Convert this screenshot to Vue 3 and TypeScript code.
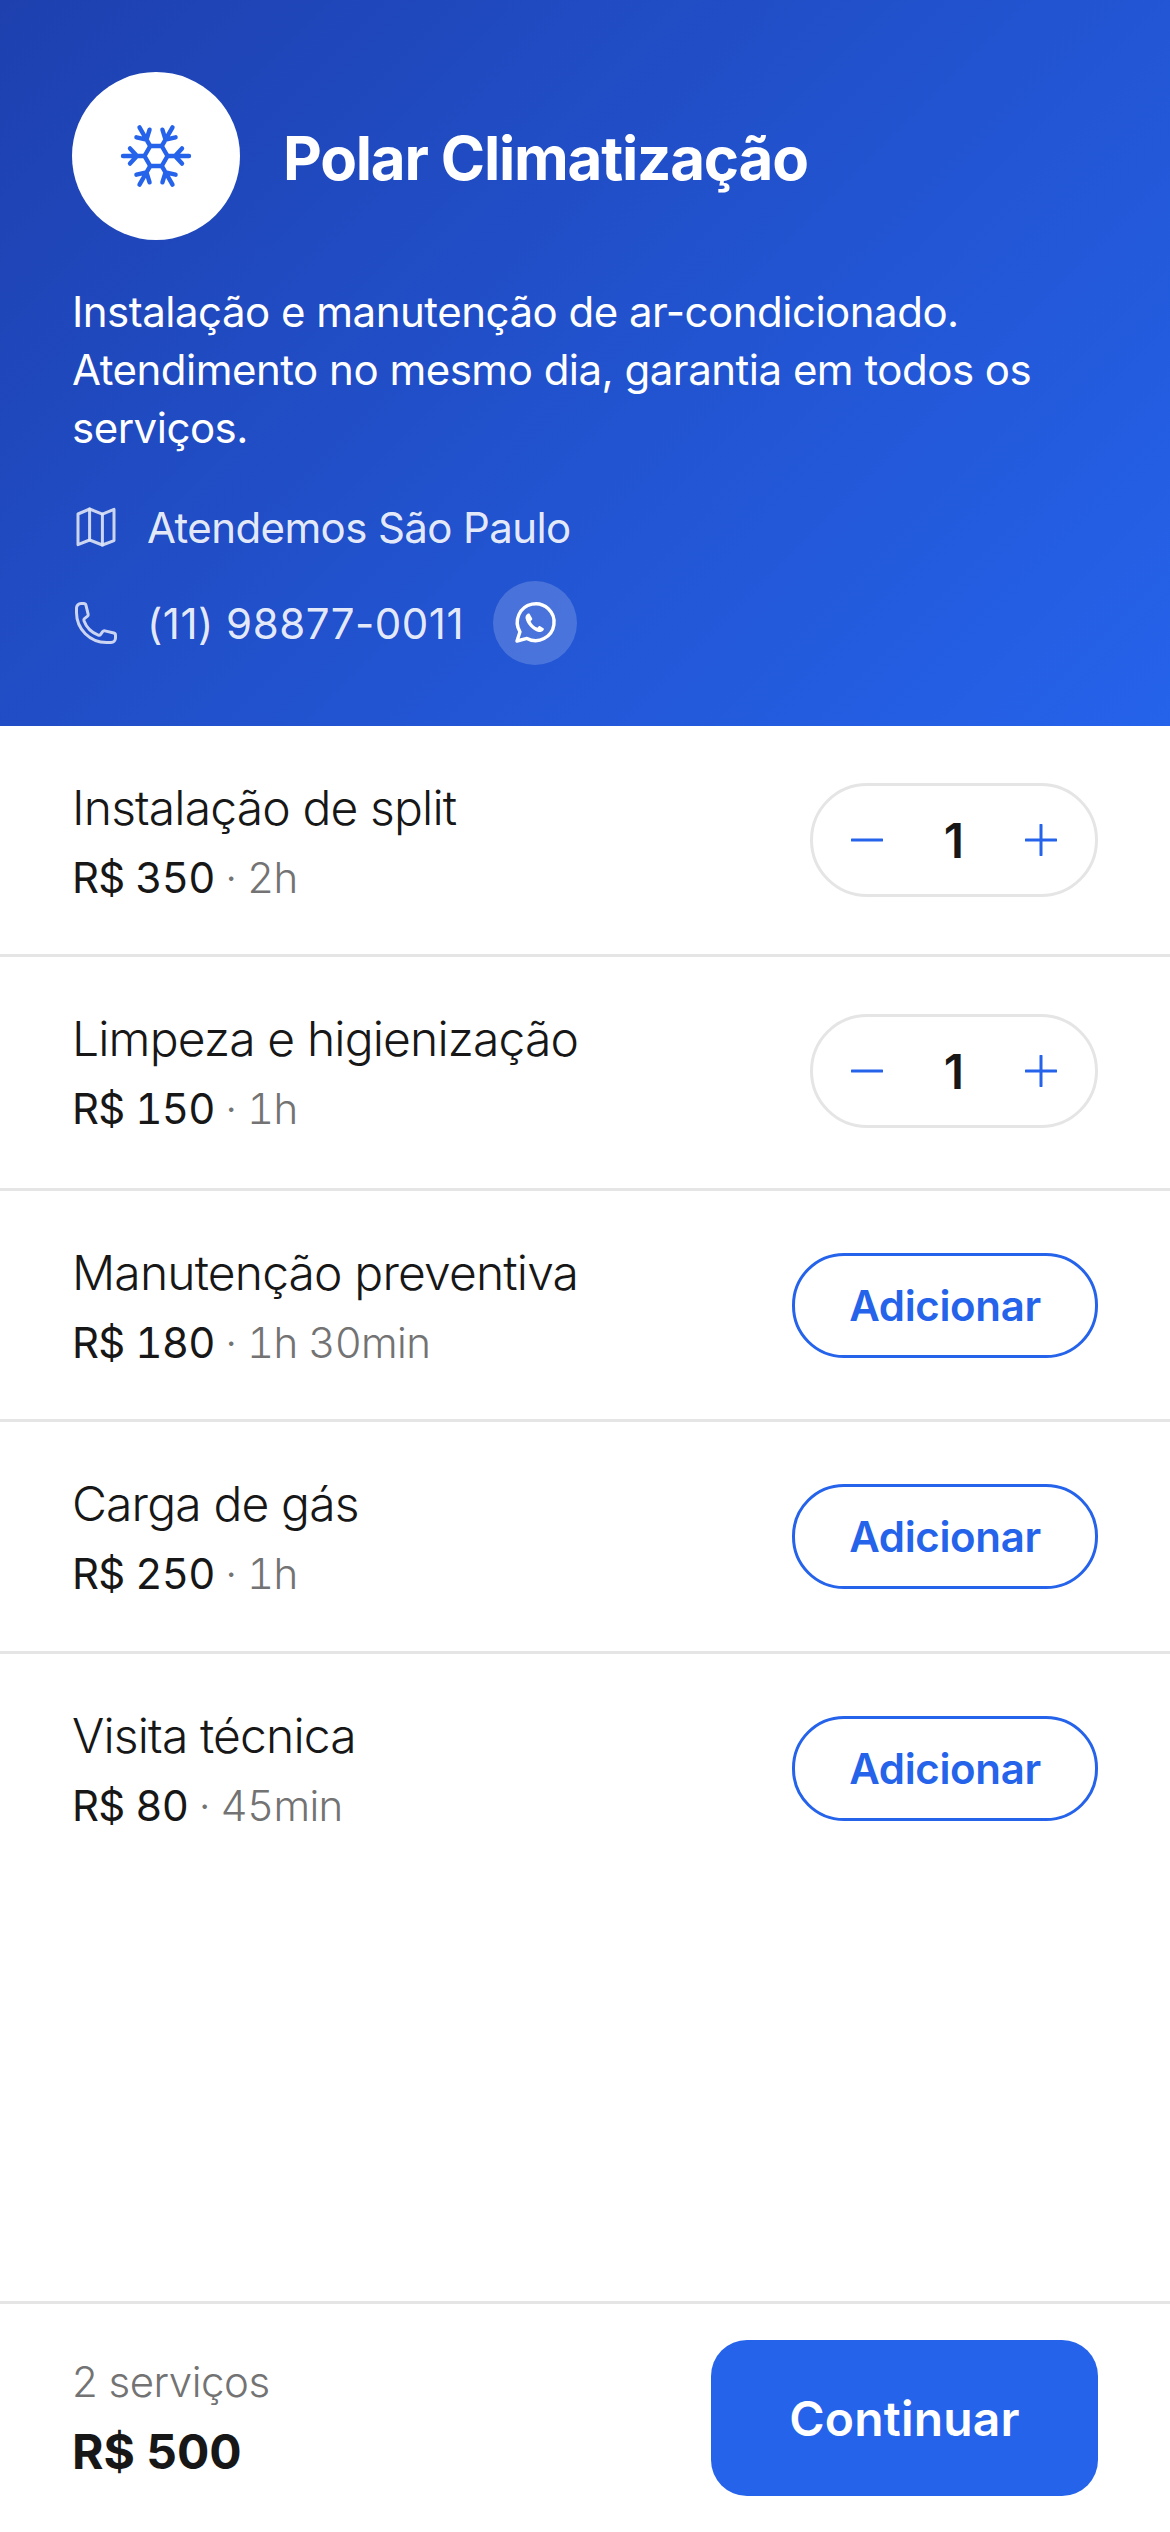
<script setup lang="ts">
interface Service { name: string; price: number; time: string; qty: number }
const services: Service[] = [
  { name: 'Instalação de split', price: 350, time: '2h', qty: 1 },
  { name: 'Limpeza e higienização', price: 150, time: '1h', qty: 1 },
  { name: 'Manutenção preventiva', price: 180, time: '1h 30min', qty: 0 },
  { name: 'Carga de gás', price: 250, time: '1h', qty: 0 },
  { name: 'Visita técnica', price: 80, time: '45min', qty: 0 },
]
const arms = [0, 60, 120, 180, 240, 300]
</script>

<template>
  <div class="page">
    <header class="hero">
      <div class="brand">
        <div class="logo">
          <svg class="flake" viewBox="0 0 72 72" fill="none" stroke="#2563eb" stroke-width="4.4" stroke-linecap="round" stroke-linejoin="round">
            <path d="M47.500 36 41.750 46H30.250L24.500 36 30.250 26H41.750Z" />
            <g v-for="a in arms" :key="a" :transform="`rotate(${a} 36 36)`">
              <path d="M47.500 36H69M62 28.400 55 36l7 7.600" />
            </g>
          </svg>
        </div>
        <h1 class="title">Polar Climatização</h1>
      </div>
      <p class="desc">Instalação e manutenção de ar-condicionado. Atendimento no mesmo dia, garantia em todos os serviços.</p>
      <div class="info area">
        <svg class="ico" viewBox="0 0 24 24" fill="none" stroke="currentColor" stroke-width="1.5" stroke-linecap="round" stroke-linejoin="round">
          <path d="M3 5.500 8.800 3l6.400 2.600L21 3.200v15.600L15.200 21l-6.400-2.500L3 20.800z" />
          <path d="M8.800 3v15.500M15.200 5.600V21" />
        </svg>
        <span>Atendemos São Paulo</span>
      </div>
      <div class="info phone">
        <svg class="ico" viewBox="0 0 24 24" fill="none" stroke="currentColor" stroke-width="1.5" stroke-linecap="round" stroke-linejoin="round">
          <path d="M2.250 6.750c0 8.284 6.716 15 15 15h2.250a2.250 2.250 0 0 0 2.250-2.250v-1.372c0-.516-.351-.966-.852-1.091l-4.423-1.106c-.44-.11-.902.055-1.173.417l-.97 1.293c-.282.376-.769.542-1.210.38a12.035 12.035 0 0 1-7.143-7.143c-.162-.441.004-.928.38-1.210l1.293-.97c.363-.271.527-.734.417-1.173L6.963 3.102a1.125 1.125 0 0 0-1.091-.852H4.500A2.250 2.250 0 0 0 2.250 4.500v2.250Z" />
        </svg>
        <span class="tel">(11) 98877-0011</span>
        <div class="wa">
          <svg viewBox="0 0 24 24" width="48" height="48" fill="none" stroke="#fff" stroke-linejoin="round" stroke-linecap="round">
            <path stroke-width="1.7" d="M3 21l1.500-4.600A9.200 9.200 0 1 1 8 19.700z" />
            <path fill="#fff" stroke="none" d="M9.200 7.300c-.3-.1-.6-.1-.9.1-.8.6-1.200 1.400-1 2.400.5 2.700 3.600 6 6.500 6.700 1 .2 1.900-.2 2.500-1 .2-.3.2-.7-.1-.9l-1.600-1c-.3-.2-.6-.1-.8.1l-.6.7c-1.500-.5-2.800-1.800-3.400-3.300l.6-.6c.2-.2.3-.5.2-.8z" />
          </svg>
        </div>
      </div>
    </header>

    <main class="list">
      <div v-for="s in services" :key="s.name" class="row">
        <div class="meta">
          <div class="name">{{ s.name }}</div>
          <div class="sub"><span class="price">R$ {{ s.price }}</span><span class="time"> · {{ s.time }}</span></div>
        </div>
        <div v-if="s.qty" class="stepper">
          <svg class="op" viewBox="0 0 32 32" fill="none" stroke="#2563eb" stroke-width="3" stroke-linecap="round"><path d="M1 16h30" /></svg>
          <span class="qty">{{ s.qty }}</span>
          <svg class="op" viewBox="0 0 32 32" fill="none" stroke="#2563eb" stroke-width="3" stroke-linecap="round"><path d="M1 16h30M16 1v30" /></svg>
        </div>
        <button v-else class="add">Adicionar</button>
      </div>
    </main>

    <footer class="foot">
      <div>
        <div class="count">2 serviços</div>
        <div class="total">R$ 500</div>
      </div>
      <button class="go">Continuar</button>
    </footer>
  </div>
</template>

<style scoped>
.page {
  width: 1170px;
  height: 2532px;
  display: flex;
  flex-direction: column;
  background: #fff;
  font-family: Inter, "Noto Sans", sans-serif;
  color: #171717;
}
.hero {
  height: 726px;
  box-sizing: border-box;
  padding: 72px 72px 0;
  background: linear-gradient(135deg, #1e40af, #2563eb);
  color: #fff;
}
.brand { display: flex; align-items: center; gap: 43px; }
.logo {
  width: 168px; height: 168px; border-radius: 50%; background: #fff;
  display: flex; align-items: center; justify-content: center;
}
.flake { width: 72px; height: 72px; }
.title { margin: 3px 0 0; font-size: 60px; font-weight: 700; line-height: 72px; letter-spacing: -1.2px; }
.desc { margin: 43px 0 0; font-size: 42px; line-height: 58px; letter-spacing: -0.5px; }
.info { display: flex; align-items: center; font-size: 42px; letter-spacing: -0.6px; color: rgba(255,255,255,.9); }
.area { margin-top: 40px; height: 60px; }
.phone { margin-top: 24px; height: 84px; }
.tel { letter-spacing: 0.5px; }
.ico { width: 48px; height: 48px; margin-right: 27px; opacity: .85; flex: none; }
.wa {
  width: 84px; height: 84px; border-radius: 50%; margin-left: 29px;
  background: rgba(255,255,255,.18);
  display: flex; align-items: center; justify-content: center;
}
.list { flex: 1; }
.row {
  height: 231px;
  box-sizing: border-box;
  padding: 0 72px;
  display: flex; align-items: center; justify-content: space-between;
  border-bottom: 3px solid #e5e5e5;
}
.row:nth-child(2) { height: 234px; padding-bottom: 3px; }
.row:nth-child(4) { height: 232px; padding-bottom: 1px; }
.row:last-child { border-bottom: 0; padding-bottom: 3px; }
.name { font-size: 48px; font-weight: 300; line-height: 60px; letter-spacing: -0.85px; }
.sub { margin-top: 16px; font-size: 42px; line-height: 48px; letter-spacing: -0.7px; }
.price { font-variant-numeric: tabular-nums; }
.time { color: #737373; font-weight: 300; font-variant-numeric: tabular-nums; }
.stepper {
  width: 288px; height: 114px; box-sizing: border-box;
  border: 3px solid #e5e5e5; border-radius: 57px;
  display: flex; align-items: center; justify-content: space-between;
  padding: 0 38px;
}
.op { width: 32px; height: 32px; }
.qty { font-size: 48px; font-weight: 600; }
.add {
  width: 306px; height: 105px; box-sizing: border-box;
  border: 3px solid #2563eb; border-radius: 52px; background: #fff;
  color: #2563eb; font: 600 42px Inter, sans-serif; letter-spacing: -0.35px; padding: 0;
}
.foot {
  height: 231px; box-sizing: border-box;
  border-top: 3px solid #e5e5e5;
  padding: 36px 72px 36px;
  display: flex; align-items: flex-start; justify-content: space-between;
}
.count { margin-top: 15px; font-size: 42px; line-height: 54px; letter-spacing: -0.5px; color: #737373; font-weight: 300; }
.total { margin-top: 14px; font-size: 48px; line-height: 58px; font-weight: 700; }
.go {
  width: 387px; height: 156px; border: 0; border-radius: 36px;
  background: #2563eb; color: #fff; font: 600 48px Inter, sans-serif; letter-spacing: 0.2px; padding: 0;
}
</style>
